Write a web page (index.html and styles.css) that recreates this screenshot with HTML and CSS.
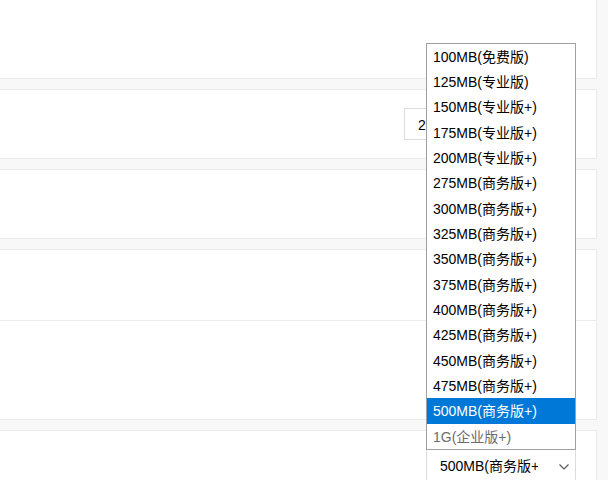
FILE: index.html
```html
<!DOCTYPE html>
<html lang="zh-CN">
<head>
  <meta charset="UTF-8" />
  <meta name="viewport" content="width=device-width, initial-scale=1.0"/>
  <title>空间设置</title>
  <link rel="stylesheet" href="styles.css">
</head>
<body>
<div class="page">
  <!-- 上一个设置块（已滚出顶部） -->
  <div class="card card-first"></div>

  <!-- 邮箱容量 -->
  <div class="card">
    <div class="row">
      <div class="select wide">
        <span class="select-value">200MB(专业版+)</span>
        <svg class="chevron" width="10" height="6" viewBox="0 0 10 6"><path d="M0.5 0.5 L5 5 L9.5 0.5" fill="none" stroke="#555" stroke-width="1.1"/></svg>
      </div>
    </div>
  </div>

  <div class="card">
    <div class="row"></div>
  </div>

  <div class="card">
    <div class="row row-mid"></div>
    <div class="row row-tall"></div>
  </div>

  <!-- 网盘容量，下拉框展开 -->
  <div class="card">
    <div class="row row-open">
      <div class="select open">
        <span class="select-value">500MB(商务版+)</span>
        <svg class="chevron" width="10" height="6" viewBox="0 0 10 6"><path d="M0.5 0.5 L5 5 L9.5 0.5" fill="none" stroke="#555" stroke-width="1.1"/></svg>

        <ul class="options">
          <li>100MB(免费版)</li>
          <li>125MB(专业版)</li>
          <li>150MB(专业版+)</li>
          <li>175MB(专业版+)</li>
          <li>200MB(专业版+)</li>
          <li>275MB(商务版+)</li>
          <li>300MB(商务版+)</li>
          <li>325MB(商务版+)</li>
          <li>350MB(商务版+)</li>
          <li>375MB(商务版+)</li>
          <li>400MB(商务版+)</li>
          <li>425MB(商务版+)</li>
          <li>450MB(商务版+)</li>
          <li>475MB(商务版+)</li>
          <li class="selected">500MB(商务版+)</li>
          <li class="disabled">1G(企业版+)</li>
        </ul>
      </div>
    </div>
  </div>
</div>
</body>
</html>
```

FILE: styles.css
```css
* {
  margin: 0;
  padding: 0;
  box-sizing: border-box;
}

body {
  font-family: "Liberation Sans", Arial, "Noto Sans CJK SC", sans-serif;
  font-size: 14px;
  color: #000;
  background: #f8f8f8;
  overflow: hidden;
}

.page {
  display: flex;
  flex-direction: column;
  gap: 10px;
  padding-right: 11px;
}

.card {
  background: #fff;
  border: 1px solid #ebebeb;
  border-left: none;
}

.card-first {
  border-top: none;
  height: 79px;
}

.row {
  height: 68px;
  display: flex;
  justify-content: flex-end;
  align-items: center;
  padding-right: 20px;
}

.row + .row {
  border-top: 1px solid #ebebeb;
}

.row-mid {
  height: 70px;
}

.row-tall {
  height: 99px;
}

.row-open {
  height: 60px;
  align-items: flex-start;
  padding-top: 18px;
}

/* 下拉框 */
.select {
  position: relative;
  width: 150px;
  height: 32px;
  border: 1px solid #dcdcdc;
  background: #fff;
  display: flex;
  align-items: center;
  padding: 0 37px 0 13px;
}

.select.wide {
  width: 172px;
}

.select-value {
  white-space: nowrap;
  overflow: hidden;
  min-width: 0;
}

.chevron {
  position: absolute;
  right: 6px;
  top: 14px;
}

.options {
  list-style: none;
  position: absolute;
  left: -1px;
  bottom: 100%;
  width: 150px;
  background: #fff;
  border: 1px solid #a0a0a0;
  z-index: 10;
}

.options li {
  height: 25.33px;
  line-height: 23.33px;
  padding: 2px 0 0 6px;
  white-space: nowrap;
}

.options li.selected {
  background: #0078d7;
  color: #fff;
}

.options li.disabled {
  color: #6d6d6d;
}
```
